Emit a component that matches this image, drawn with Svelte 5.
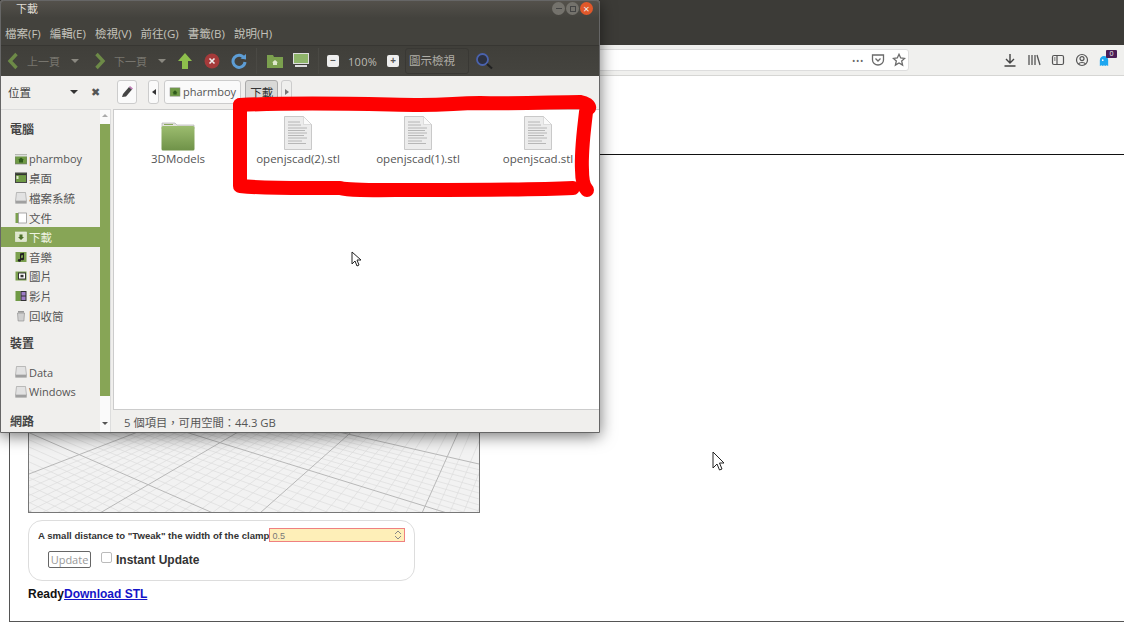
<script>
	const menus = ['檔案(F)', '編輯(E)', '檢視(V)', '前往(G)', '書籤(B)', '說明(H)'];

	const places = [
		{ label: 'pharmboy', icon: 'home', latin: true },
		{ label: '桌面', icon: 'desk' },
		{ label: '檔案系統', icon: 'disk' },
		{ label: '文件', icon: 'docs' },
		{ label: '下載', icon: 'down', active: true },
		{ label: '音樂', icon: 'music' },
		{ label: '圖片', icon: 'pics' },
		{ label: '影片', icon: 'film' },
		{ label: '回收筒', icon: 'trash' }
	];
	const devices = [
		{ label: 'Data', icon: 'disk', latin: true },
		{ label: 'Windows', icon: 'disk', latin: true }
	];
	const files = ['openjscad(2).stl', 'openjscad(1).stl', 'openjscad.stl'];

	// floor grid: major lines read off the picture, minor lines are interpolated between them
	const familyA = [
		[-128, 433, 33, 512],
		[32, 433, 213, 512],
		[192, 433, 447, 512],
		[352, 434, 479, 463]
	];
	const familyB = [
		[29, 473, 130, 434],
		[100, 512, 233, 434],
		[260, 512, 348, 434],
		[422, 512, 457, 434],
		[560, 512, 580, 434]
	];

	function extend(l) {
		const dx = l[2] - l[0];
		const dy = l[3] - l[1];
		return [l[0] - dx * 2, l[1] - dy * 2, l[2] + dx * 2, l[3] + dy * 2];
	}

	function minors(family) {
		const out = [];
		for (let i = 0; i < family.length - 1; i++) {
			const a = extend(family[i]);
			const b = extend(family[i + 1]);
			for (let s = 1; s < 10; s++) {
				const t = s / 10;
				out.push(a.map((v, k) => v + (b[k] - v) * t));
			}
		}
		return out;
	}

	const minorLines = [...minors(familyA), ...minors(familyB)];
	const majorLines = [...familyA, ...familyB].map(extend);
</script>

{#snippet placeIcon(kind)}
	<svg class="place-icon" viewBox="0 0 12 12" width="12" height="12">
		{#if kind === 'home'}
			<rect x="0" y="1.5" width="12" height="9.5" fill="#6f9a45" stroke="#777" stroke-width=".6" />
			<rect x="0" y="1.5" width="12" height="2" fill="#ddd" />
			<path d="M6 4.5 9 7H8v2.5H4V7H3z" fill="#2f5a1c" />
		{:else if kind === 'desk'}
			<rect x=".5" y="1" width="11" height="9.5" fill="#6f9a45" stroke="#444" />
			<rect x="1" y="1.5" width="10" height="1.6" fill="#333" />
			<rect x="1.5" y="4" width="2" height="3" fill="#dfe8cc" />
		{:else if kind === 'disk'}
			<path d="M1.500.5h9l1 8.500H.5z" fill="#e2e2e2" stroke="#999" stroke-width=".6" />
			<rect x=".3" y="9" width="11.400" height="2.600" fill="#a0a0a0" />
		{:else if kind === 'docs'}
			<rect x=".5" y="1" width="3" height="10" fill="#7ba04e" />
			<rect x="3.5" y="1" width="8" height="10" fill="#fff" stroke="#888" stroke-width=".7" />
		{:else if kind === 'down'}
			<rect x=".5" y="1" width="11" height="9.5" fill="#dfe8cc" stroke="#eee" stroke-width=".6" />
			<path d="M4.5 3.5h3V6H9L6 9 3 6h1.5z" fill="#4d6f2a" />
		{:else if kind === 'music'}
			<rect x=".5" y="1" width="11" height="10" fill="#7ba04e" />
			<path d="M5 2.5 9 1.8V8a1.6 1.3 0 1 1-1-1.2V4L6 4.4V9.4a1.6 1.3 0 1 1-1-1.2z" fill="#222" />
		{:else if kind === 'pics'}
			<rect x=".5" y="1.5" width="11" height="9" fill="#7ba04e" />
			<rect x="3.5" y="3" width="7" height="6" fill="#fff" stroke="#333" />
			<rect x="5.5" y="4.8" width="3" height="2.5" fill="#333" />
		{:else if kind === 'film'}
			<rect x=".5" y="1" width="5" height="10" fill="#6f9a45" />
			<rect x="5.5" y="1" width="6" height="10" fill="#333" />
			<rect x="6.5" y="2" width="4" height="3.5" fill="#9d7cc8" />
			<rect x="6.5" y="6.5" width="4" height="3.5" fill="#9d7cc8" />
		{:else}
			<rect x="3" y="1" width="6" height="1.6" fill="#999" />
			<path d="M2.5 3h7l-.6 8H3.1z" fill="#cfcfcf" stroke="#888" stroke-width=".6" />
		{/if}
	</svg>
{/snippet}

{#snippet fileIcon()}
	<svg viewBox="0 0 28 34" width="28" height="34">
		<path d="M.5.5h19l8 8v25H.5z" fill="#ececec" stroke="#c9c9c9" />
		<path d="M19.5.5v8h8z" fill="#fafafa" stroke="#ccc" stroke-width=".6" />
		<path d="M4 6h12M4 9h13M4 12h19M4 14.5h17M4 17h19M4 19.5h16M4 22h19M4 25h14M4 27.5h18" stroke="#a8a8a8" stroke-width=".8" />
	</svg>
{/snippet}

<div class="browser">
	<div class="titlebar"></div>
	<div class="navbar">
		<div class="urlbar">
			<span class="dots">•••</span>
			<svg viewBox="0 0 14 14" width="14" height="14" fill="none" stroke="#6a6a6a" stroke-width="1.3">
				<path d="M1.5 2h11v5a5.5 5 0 0 1-11 0z" />
				<path d="M4.5 5.5 7 8l2.5-2.5" />
			</svg>
			<svg viewBox="0 0 14 14" width="14" height="14" fill="none" stroke="#6a6a6a" stroke-width="1.3">
				<path d="M7 1.3 8.7 5l4 .4-3 2.7.9 4L7 10l-3.6 2.1.9-4-3-2.7 4-.4z" />
			</svg>
		</div>
		<div class="nav-icons">
			<svg viewBox="0 0 14 14" width="14" height="14" fill="none" stroke="#444" stroke-width="1.4">
				<path d="M7 1v9M3 6l4 4 4-4M1.5 13h11" />
			</svg>
			<svg viewBox="0 0 14 14" width="14" height="14" fill="none" stroke="#555" stroke-width="1.3">
				<path d="M2 2v10M5 2v10M8 2v10M10 2l3 10" />
			</svg>
			<svg viewBox="0 0 14 14" width="14" height="14" fill="none" stroke="#555" stroke-width="1.2">
				<rect x="1.5" y="2.5" width="11" height="9" rx="1.5" />
				<path d="M6 2.5v9" />
				<path d="M3 5h1.5M3 7h1.5" />
			</svg>
			<svg viewBox="0 0 14 14" width="14" height="14" fill="none" stroke="#555" stroke-width="1.2">
				<circle cx="7" cy="7" r="5.5" />
				<circle cx="7" cy="5.6" r="2" />
				<path d="M3.5 11c1-2 6-2 7 0" />
			</svg>
			<div class="ghost">
				<svg viewBox="0 0 12 14" width="10" height="12">
					<path d="M1 6a5 5 0 0 1 10 0v7l-2-1-1.5 1L6 12l-1.5 1L3 12l-2 1z" fill="#1ea7f0" />
					<circle cx="4.5" cy="6" r="1" fill="#fff" />
				</svg>
				<span class="badge">0</span>
			</div>
		</div>
	</div>
	<div class="page">
		<div class="panel">
			<div class="viewer">
				<svg class="grid" viewBox="28 154 452 359" width="452" height="359">
					{#each minorLines as l}
						<line x1={l[0]} y1={l[1]} x2={l[2]} y2={l[3]} stroke="#dcdcdc" stroke-width=".7" />
					{/each}
					{#each majorLines as l}
						<line x1={l[0]} y1={l[1]} x2={l[2]} y2={l[3]} stroke="#b8b8b8" stroke-width="1" />
					{/each}
				</svg>
			</div>
			<div class="params">
				<div class="param-row">
					<span class="param-label">A small distance to "Tweak" the width of the clamp</span>
					<div class="number">
						<span>0.5</span>
						<span class="spin">
							<svg viewBox="0 0 8 6" width="8" height="6" fill="none" stroke="#888"><path d="M1 5l3-3 3 3" /></svg>
							<svg viewBox="0 0 8 6" width="8" height="6" fill="none" stroke="#888"><path d="M1 1l3 3 3-3" /></svg>
						</span>
					</div>
				</div>
				<div class="update-row">
					<span class="update">Update</span>
					<span class="check"></span>
					<span class="instant">Instant Update</span>
				</div>
			</div>
			<div class="status"><span>Ready</span><a href="#stl">Download STL</a></div>
		</div>
	</div>

	<div class="window">
		<div class="win-title">
			<span>下載</span>
			<div class="win-buttons">
				<span class="wbtn"><i class="w-min"></i></span>
				<span class="wbtn"><i class="w-max"></i></span>
				<span class="wbtn close">×</span>
			</div>
		</div>
		<div class="menubar">
			{#each menus as m}
				<span>{m}</span>
			{/each}
		</div>
		<div class="win-tools">
			<svg viewBox="0 0 12 18" width="12" height="18" fill="none" stroke="#6d8a47" stroke-width="3.4"><path d="M9.5 2 3 9l6.5 7" /></svg>
			<span class="t-label">上一頁</span>
			<span class="t-drop"></span>
			<svg viewBox="0 0 12 18" width="12" height="18" fill="none" stroke="#6d8a47" stroke-width="3.4"><path d="M2.5 2 9 9l-6.5 7" /></svg>
			<span class="t-label">下一頁</span>
			<span class="t-drop"></span>
			<svg class="t-up" viewBox="0 0 16 18" width="16" height="18"><path d="M8 1l7 8h-4v8H5V9H1z" fill="#8ebf4c" /></svg>
			<svg class="t-stop" viewBox="0 0 16 16" width="16" height="16">
				<circle cx="8" cy="8" r="7.5" fill="#a53a3a" />
				<path d="M5.5 5.5l5 5M10.5 5.5l-5 5" stroke="#eee" stroke-width="1.6" />
			</svg>
			<svg class="t-reload" viewBox="0 0 16 16" width="16" height="16" fill="none">
				<path d="M13 5A6 6 0 1 0 14 9" stroke="#5d9dd5" stroke-width="3" />
				<path d="M9.5 5.5 15 6.5V1z" fill="#5d9dd5" />
			</svg>
			<span class="t-sep"></span>
			<svg viewBox="0 0 16 14" width="16" height="14">
				<path d="M0 1h6l1 2h9v11H0z" fill="#7ba04e" />
				<path d="M8 6l3 2.500h-1V11H6V8.500H5z" fill="#dfe8cc" />
			</svg>
			<svg class="t-desk" viewBox="0 0 16 16" width="16" height="16">
				<rect x=".5" y=".5" width="15" height="10" fill="#8fb56a" stroke="#ddd" />
				<rect x="2" y="12" width="12" height="2" fill="#ddd" />
			</svg>
			<span class="t-sep second"></span>
			<span class="zoom-btn">−</span>
			<span class="zoom-level">100%</span>
			<span class="zoom-btn">+</span>
			<span class="view-select">圖示檢視</span>
			<svg class="t-search" viewBox="0 0 18 18" width="18" height="18" fill="none">
				<circle cx="7.500" cy="7.500" r="5.500" fill="#2c3140" stroke="#4a62ad" stroke-width="1.800" />
				<path d="M12 12l5 4.500" stroke="#222" stroke-width="2.200" />
			</svg>
		</div>
		<div class="location">
			<span class="loc-title">位置</span>
			<span class="loc-drop"></span>
			<span class="loc-x">✖</span>
			<span class="edit-btn">
				<svg viewBox="0 0 14 14" width="14" height="14">
					<path d="M2 12l1-3 6-7 3 2.500-6 7z" fill="#444" />
					<path d="M9 2l1-1 3 2.500-1 1z" fill="#c07ab8" />
				</svg>
			</span>
			<span class="crumb-arrow"><i class="arrow-left"></i></span>
			<span class="crumb">
				<svg viewBox="0 0 12 12" width="12" height="10">
					<rect x="0" y="1" width="12" height="10" fill="#6f9a45" stroke="#888" stroke-width=".6" />
					<path d="M6 4l3 2.500H8V9H4V6.500H3z" fill="#2f5a1c" />
				</svg>
				pharmboy
			</span>
			<span class="crumb current">下載</span>
			<span class="crumb-arrow right"><i class="arrow-right"></i></span>
		</div>
		<div class="win-body">
			<div class="sidebar">
				<div class="side-list">
					<div class="side-head first">電腦</div>
					{#each places as p}
						<div class="side-row" class:active={p.active}>
							{@render placeIcon(p.icon)}
							<span class:latin={p.latin}>{p.label}</span>
						</div>
					{/each}
					<div class="side-head">裝置</div>
					<div class="side-gap"></div>
					{#each devices as d}
						<div class="side-row">
							{@render placeIcon(d.icon)}
							<span class:latin={d.latin}>{d.label}</span>
						</div>
					{/each}
					<div class="side-head last">網路</div>
				</div>
				<div class="scroll">
					<i class="arrow-up"></i>
					<div class="thumb"></div>
					<i class="arrow-down"></i>
				</div>
			</div>
			<div class="main">
				<div class="files">
					<div class="file">
						<svg class="folder" viewBox="0 0 34 30" width="34" height="30">
							<path d="M1 2h13l2 2h17v4H1z" fill="#e3e3de" stroke="#aaa" stroke-width=".6" />
							<rect x="3" y="3" width="9" height="1" fill="#8ba85f" />
							<rect x=".5" y="5" width="33" height="24.500" rx="1.500" fill="url(#folderFill)" />
							<defs>
								<linearGradient id="folderFill" x1="0" y1="0" x2="0" y2="1">
									<stop offset="0" stop-color="#9cbc6f" />
									<stop offset="1" stop-color="#6f9248" />
								</linearGradient>
							</defs>
						</svg>
						<span>3DModels</span>
					</div>
					{#each files as f}
						<div class="file">
							{@render fileIcon()}
							<span>{f}</span>
						</div>
					{/each}
				</div>
				<div class="win-status">5 個項目，可用空間：44.3 GB</div>
			</div>
		</div>
	</div>

	<svg class="scribble" viewBox="0 0 600 200" width="600" height="200" fill="none" stroke="#fe0000" stroke-width="14" stroke-linecap="round" stroke-linejoin="round">
		<path d="M240 105C300 102 360 104 420 105C450 105 455 103 480 103C520 104 555 102 580 102C586 103 590 106 589 108" />
		<path d="M240 105V186C270 189 310 188 340 188C350 191 380 190 420 190C470 190 530 190 573 188" />
		<path d="M586 112C584 130 581 150 582 170C582 180 584 187 587 190" />
	</svg>

	<svg class="cursor win-cursor" viewBox="0 0 11 16" width="11" height="16">
		<path d="M1 1v12l3-3 2 5 2-1-2-5h4z" fill="#fff" stroke="#222" />
	</svg>
	<svg class="cursor page-cursor" viewBox="0 0 13 20" width="13" height="20">
		<path d="M1 1v16l4-4 2.500 6 2.500-1-2.500-6H12z" fill="#fff" stroke="#222" />
	</svg>
</div>

<style>
	:global(body) {
		margin: 0;
		background: #fff;
	}

	.browser {
		position: relative;
		width: 1124px;
		height: 626px;
		overflow: hidden;
		display: flex;
		flex-direction: column;
		font-family: "Open Sans", "Noto Sans CJK TC", sans-serif;
	}

	.titlebar {
		height: 45px;
		background: #3c3b37;
		flex: none;
	}

	.navbar {
		height: 30px;
		flex: none;
		background: #f0f0ee;
		border-bottom: 1px solid #d6d6d4;
		display: flex;
		align-items: center;
	}

	.urlbar {
		width: 909px;
		height: 22px;
		box-sizing: border-box;
		background: #fff;
		border: 1px solid #ddd;
		border-radius: 3px;
		display: flex;
		align-items: center;
		justify-content: flex-end;
		gap: 7px;
		padding-right: 2px;
	}

	.dots {
		font-size: 9px;
		letter-spacing: 0.6px;
		color: #666;
	}

	.nav-icons {
		margin-left: 94px;
		display: flex;
		align-items: center;
		gap: 10px;
	}

	.ghost {
		position: relative;
		margin-left: 0;
		height: 12px;
		margin-top: 1px;
	}

	.ghost svg {
		display: block;
	}

	.badge {
		position: absolute;
		left: 7px;
		top: -5px;
		width: 11px;
		height: 8px;
		background: #4a1c56;
		color: #eee;
		font-size: 7px;
		line-height: 8px;
		text-align: center;
		border-radius: 1px;
	}

	.page {
		flex: 1;
		padding: 78px 0 0 9px;
		overflow: hidden;
		background: #fff;
	}

	.panel {
		width: 1130px;
		height: 468px;
		box-sizing: border-box;
		border: 1px solid #555;
		border-top-color: #111;
		padding: 0 0 0 18px;
		font-family: "Liberation Sans", Arial, sans-serif;
	}

	.viewer {
		width: 452px;
		height: 358px;
		box-sizing: border-box;
		border: 1px solid #777;
		background: #f2f2f2;
		overflow: hidden;
	}

	.grid {
		display: block;
		margin: -1px;
	}

	.params {
		margin-top: 7px;
		width: 387px;
		height: 61px;
		box-sizing: border-box;
		border: 1px solid #ddd;
		border-radius: 14px;
		padding: 7px 0 0 9px;
		color: #333;
	}

	.param-row {
		display: flex;
		align-items: center;
	}

	.param-label {
		font-size: 9.6px;
		font-weight: bold;
		white-space: nowrap;
	}

	.number {
		width: 136px;
		height: 14px;
		box-sizing: border-box;
		background: #feefb8;
		border: 1px solid #ef8080;
		font-size: 9px;
		line-height: 12px;
		color: #777;
		padding: 1px 0 0 2px;
		display: flex;
		justify-content: space-between;
		align-items: center;
	}

	.spin {
		display: flex;
		flex-direction: column;
		margin: -1px 2px 0 0;
	}

	.spin svg {
		display: block;
	}

	.update-row {
		display: flex;
		align-items: center;
		margin: 9px 0 0 10px;
	}

	.update {
		width: 43px;
		height: 17px;
		box-sizing: border-box;
		border: 1px solid #666;
		border-radius: 2px;
		font-family: "Open Sans", sans-serif;
		font-size: 11px;
		line-height: 15px;
		color: #999;
		text-align: center;
	}

	.check {
		width: 9px;
		height: 9px;
		margin: -4px 4px 0 10px;
		border: 1px solid #bbb;
		border-radius: 2px;
		background: #fff;
	}

	.instant {
		font-size: 12px;
		font-weight: bold;
	}

	.status {
		margin-top: 6px;
		font-size: 12px;
		font-weight: bold;
		color: #111;
	}

	.status a {
		color: #1414c8;
	}

	.window {
		position: absolute;
		left: 0;
		top: 0;
		width: 600px;
		height: 433px;
		display: flex;
		flex-direction: column;
		background: #f0efed;
		box-shadow: 0 3px 16px rgba(0, 0, 0, 0.55);
		border-radius: 4px 4px 0 0;
		color: #555;
		font-size: 11.5px;
		outline: 1px solid #666;
		outline-offset: -1px;
	}

	.win-title {
		height: 18px;
		flex: none;
		background: linear-gradient(#55524c, #43423d);
		border-radius: 4px 4px 0 0;
		color: #dfdbd2;
		font-size: 11px;
		line-height: 18px;
		padding-left: 16px;
		display: flex;
		justify-content: space-between;
	}

	.win-buttons {
		display: flex;
		gap: 1px;
		margin: 2px 7px 0 0;
	}

	.wbtn {
		width: 13px;
		height: 13px;
		border-radius: 50%;
		background: #74726c;
		display: flex;
		align-items: center;
		justify-content: center;
		font-size: 11px;
		line-height: 13px;
		color: #eee;
	}

	.wbtn.close {
		background: #e0582a;
	}

	.w-min {
		width: 6px;
		height: 1px;
		background: #444;
	}

	.w-max {
		width: 6px;
		height: 6px;
		border: 1px solid #444;
		box-sizing: border-box;
	}

	.menubar {
		height: 27px;
		flex: none;
		box-sizing: border-box;
		padding: 2px 0 0 5px;
		background: #43423d;
		display: flex;
		align-items: center;
		gap: 9px;
		color: #c4c2bb;
		font-size: 11.5px;
	}

	.win-tools {
		height: 31px;
		flex: none;
		box-sizing: border-box;
		background: linear-gradient(#403f3a, #45443f);
		border-top: 1px solid #373632;
		display: flex;
		align-items: center;
		color: #8a8880;
		font-size: 11px;
		padding-left: 7px;
	}

	.t-label {
		margin-left: 8px;
		color: #77756e;
	}

	.t-drop {
		margin: 0 15px 0 11px;
		border-left: 4px solid transparent;
		border-right: 4px solid transparent;
		border-top: 4px solid #8a8880;
	}

	.t-up {
		margin-left: -4px;
	}

	.t-stop {
		margin-left: 11px;
	}

	.t-reload {
		margin-left: 11px;
	}

	.t-sep {
		width: 1px;
		height: 26px;
		background: #4a4944;
		margin: 0 10px 0 9px;
	}

	.t-desk {
		margin-left: 10px;
	}

	.t-sep.second {
		margin: 0 8px 0 9px;
	}

	.zoom-btn {
		width: 12px;
		height: 12px;
		border-radius: 2px;
		background: #eee;
		color: #555;
		font-size: 10px;
		line-height: 11px;
		text-align: center;
		font-weight: bold;
	}

	.zoom-level {
		margin: 0 9px;
		width: 30px;
		font-size: 11px;
		color: #bdbbb4;
		letter-spacing: 0.3px;
		white-space: nowrap;
	}

	.view-select {
		margin-left: 6px;
		width: 64px;
		height: 26px;
		box-sizing: border-box;
		border: 1px solid #393834;
		border-radius: 3px;
		line-height: 24px;
		padding-left: 3px;
		color: #b0aea7;
		font-size: 11.5px;
	}

	.t-search {
		margin-left: 6px;
	}

	.location {
		height: 33px;
		flex: none;
		box-sizing: border-box;
		padding: 0 0 2px 8px;
		display: flex;
		align-items: center;
		font-size: 11.5px;
		color: #444;
	}

	.loc-title {
		width: 62px;
	}

	.loc-drop {
		border-left: 4px solid transparent;
		border-right: 4px solid transparent;
		border-top: 4px solid #333;
	}

	.loc-x {
		margin-left: 13px;
		font-size: 11px;
		color: #555;
	}

	.edit-btn {
		margin-left: 17px;
		width: 20px;
		height: 24px;
		box-sizing: border-box;
		border: 1px solid #ccc;
		border-radius: 3px;
		background: #fafafa;
		display: flex;
		align-items: center;
		justify-content: center;
	}

	.crumb-arrow {
		margin-left: 11px;
		width: 11px;
		height: 24px;
		box-sizing: border-box;
		border: 1px solid #ccc;
		border-radius: 3px;
		background: #fafafa;
		display: flex;
		align-items: center;
		justify-content: center;
	}

	.crumb-arrow.right {
		margin-left: 3px;
		background: #efefed;
	}

	.arrow-left {
		border-top: 3.5px solid transparent;
		border-bottom: 3.5px solid transparent;
		border-right: 4px solid #333;
	}

	.arrow-right {
		border-top: 3.5px solid transparent;
		border-bottom: 3.5px solid transparent;
		border-left: 4px solid #777;
	}

	.crumb {
		margin-left: 5px;
		height: 24px;
		box-sizing: border-box;
		border: 1px solid #ccc;
		border-radius: 3px;
		background: #fafafa;
		padding: 0 4px;
		display: flex;
		align-items: center;
		gap: 2px;
		color: #555;
		font-size: 11px;
	}

	.crumb.current {
		background: #d9d9d7;
		border-color: #aaa;
		margin-left: 4px;
		color: #333;
		font-size: 11.5px;
	}

	.win-body {
		flex: 1;
		min-height: 0;
		display: flex;
		background: #f0efed;
	}

	.sidebar {
		width: 110px;
		flex: none;
		display: flex;
		border-right: 1px solid #ddd;
		border-top: 1px solid #ddd;
		overflow: hidden;
	}

	.side-list {
		width: 100px;
		flex: none;
		display: flex;
		flex-direction: column;
	}

	.side-head {
		font-weight: bold;
		color: #444;
		font-size: 12px;
		height: 18px;
		line-height: 18px;
		padding-left: 10px;
		margin-top: 10px;
	}

	.side-head.first {
		margin-top: 11px;
		margin-bottom: 10px;
	}

	.side-head.last {
		margin-top: 11px;
	}

	.side-gap {
		height: 9px;
		flex: none;
	}

	.side-row {
		height: 19.6px;
		flex: none;
		display: flex;
		align-items: center;
		gap: 2px;
		padding-left: 15px;
		white-space: nowrap;
		font-size: 11.5px;
	}

	.side-row .latin {
		font-size: 11px;
	}

	.side-row.active {
		background: #87a556;
		color: #eef3e2;
	}

	.place-icon {
		flex: none;
	}

	.scroll {
		width: 10px;
		flex: none;
		background: #fafafa;
		display: flex;
		flex-direction: column;
		align-items: center;
	}

	.arrow-up {
		margin-top: 4px;
		border-left: 3px solid transparent;
		border-right: 3px solid transparent;
		border-bottom: 3px solid #aaa;
	}

	.thumb {
		width: 10px;
		height: 272px;
		margin-top: 7px;
		background: #87a556;
		flex: none;
	}

	.arrow-down {
		margin-top: 26px;
		border-left: 3px solid transparent;
		border-right: 3px solid transparent;
		border-top: 3px solid #555;
	}

	.main {
		flex: 1;
		display: flex;
		flex-direction: column;
		padding-left: 2px;
		min-width: 0;
	}

	.files {
		flex: 1;
		background: #fff;
		border: 1px solid #ccc;
		border-right: none;
		display: flex;
		padding: 3px 0 0 4px;
		align-items: flex-start;
	}

	.file {
		width: 120px;
		flex: none;
		height: 53px;
		display: flex;
		flex-direction: column;
		align-items: center;
		justify-content: flex-end;
		gap: 1px;
		font-size: 11.5px;
		color: #555;
	}

	.folder {
		margin-bottom: -1px;
	}

	.win-status {
		height: 23px;
		flex: none;
		line-height: 25px;
		padding-left: 11px;
		font-size: 11.3px;
		color: #555;
	}

	.scribble {
		position: absolute;
		left: 0;
		top: 0;
	}

	.cursor {
		position: absolute;
	}

	.win-cursor {
		left: 351px;
		top: 251px;
	}

	.page-cursor {
		left: 712px;
		top: 451px;
	}
</style>
